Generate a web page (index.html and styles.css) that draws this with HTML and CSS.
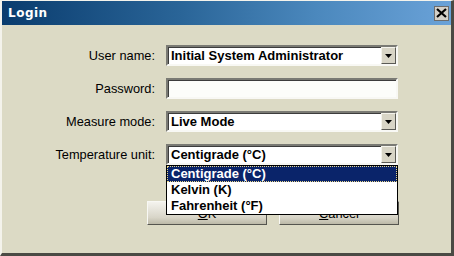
FILE: index.html
```html
<!DOCTYPE html>
<html lang="en">
<head>
  <meta charset="UTF-8" />
  <title>Login</title>
  <link rel="stylesheet" href="styles.css">
</head>
<body>
  <div class="window">
    <div class="titlebar">
      <span class="title">Login</span>
      <span class="close">
        <svg width="11" height="10" viewBox="0 0 11 10">
          <path d="M1 1 L10 9 M10 1 L1 9" stroke="#000" stroke-width="2.2" />
        </svg>
      </span>
    </div>

    <div class="content">
      <div class="form">
        <label class="label">User name:</label>
        <div class="select">
          <span class="value">Initial System Administrator</span>
          <span class="arrow"><svg width="7" height="4" viewBox="0 0 7 4"><path d="M0 0 H7 L3.5 4 Z" fill="#000" /></svg></span>
        </div>

        <label class="label">Password:</label>
        <div class="input"></div>

        <label class="label">Measure mode:</label>
        <div class="select">
          <span class="value">Live Mode</span>
          <span class="arrow"><svg width="7" height="4" viewBox="0 0 7 4"><path d="M0 0 H7 L3.5 4 Z" fill="#000" /></svg></span>
        </div>

        <label class="label">Temperature unit:</label>
        <div class="select open">
          <span class="value">Centigrade (°C)</span>
          <span class="arrow"><svg width="7" height="4" viewBox="0 0 7 4"><path d="M0 0 H7 L3.5 4 Z" fill="#000" /></svg></span>
          <ul class="list">
            <li class="selected">Centigrade (°C)</li>
            <li>Kelvin (K)</li>
            <li>Fahrenheit (°F)</li>
          </ul>
        </div>
      </div>

      <div class="buttons">
        <button type="button"><u>O</u>K</button>
        <button type="button"><u>C</u>ancel</button>
      </div>
    </div>
  </div>
</body>
</html>
```

FILE: styles.css
```css
* {
  box-sizing: border-box;
}

body {
  margin: 0;
  padding: 0;
  font-family: 'Liberation Sans', Arial, sans-serif;
  font-size: 12px;
  background: #dcdac5;
}

.window {
  width: 454px;
  height: 256px;
  background: #dcdac5;
  border-top: 1px solid #f4f3ec;
  border-left: 2px solid #f4f3ec;
  border-right: 3px solid #4a4a44;
  border-bottom: 3px solid #4a4a44;
  display: flex;
  flex-direction: column;
}

.titlebar {
  height: 24px;
  flex-shrink: 0;
  background: linear-gradient(to right, #0a3c6e, #2a6598 40%, #4b88bd 70%, #6aa2d8);
  display: flex;
  align-items: center;
  justify-content: space-between;
  padding: 0 2px 0 6px;
}

.title {
  color: #ffffff;
  font-family: 'DejaVu Sans', sans-serif;
  font-weight: bold;
  font-size: 12px;
  letter-spacing: 0.5px;
}

.close {
  width: 15px;
  height: 15px;
  background: #d4d0c8;
  border: 1px solid #6c6c6c;
  display: flex;
  align-items: center;
  justify-content: center;
}

.content {
  padding-top: 20px;
}

.form {
  display: grid;
  grid-template-columns: 153px 232px;
  grid-auto-rows: 21px;
  column-gap: 11px;
  row-gap: 12px;
}

.label {
  text-align: right;
  align-self: center;
  font-size: 12.8px;
  color: #000;
}

.select,
.input {
  position: relative;
  background: #ffffff;
  border: 2px solid;
  border-color: #7a7a74 #f8f8f4 #f8f8f4 #7a7a74;
  box-shadow: inset 1px 1px 0 #3c3c3c;
  display: flex;
  align-items: center;
}

.input {
  background: #fcfdfa;
}

.value {
  flex: 1;
  padding-left: 3px;
  font-weight: bold;
  font-size: 13px;
  color: #000;
}

.arrow {
  width: 15px;
  height: 17px;
  background: #d8d5c6;
  border: 1px solid;
  border-color: #f4f3ec #5a5a55 #5a5a55 #f4f3ec;
  display: flex;
  align-items: center;
  justify-content: center;
}

.list {
  position: absolute;
  top: 19px;
  left: -2px;
  width: 232px;
  margin: 0;
  padding: 0;
  list-style: none;
  background: #ffffff;
  border: 1px solid #000;
  z-index: 2;
}

.list li {
  height: 16px;
  line-height: 16px;
  padding-left: 4px;
  font-weight: bold;
  font-size: 13px;
  color: #000;
}

.list li.selected {
  background: #0a246a;
  color: #ffffff;
  outline: 1px dotted #e8d68a;
  outline-offset: -1px;
}

.buttons {
  display: flex;
  gap: 12px;
  padding-left: 145px;
  margin-top: 36px;
}

button {
  width: 120px;
  height: 24px;
  font-family: 'Liberation Sans', Arial, sans-serif;
  font-size: 12.8px;
  color: #000;
  background: linear-gradient(to bottom, #f4f3ee, #d8d5c8 70%, #bcb9a8);
  border: 1px solid;
  border-color: #f8f8f4 #55554f #55554f #f8f8f4;
  padding: 0;
}
```
